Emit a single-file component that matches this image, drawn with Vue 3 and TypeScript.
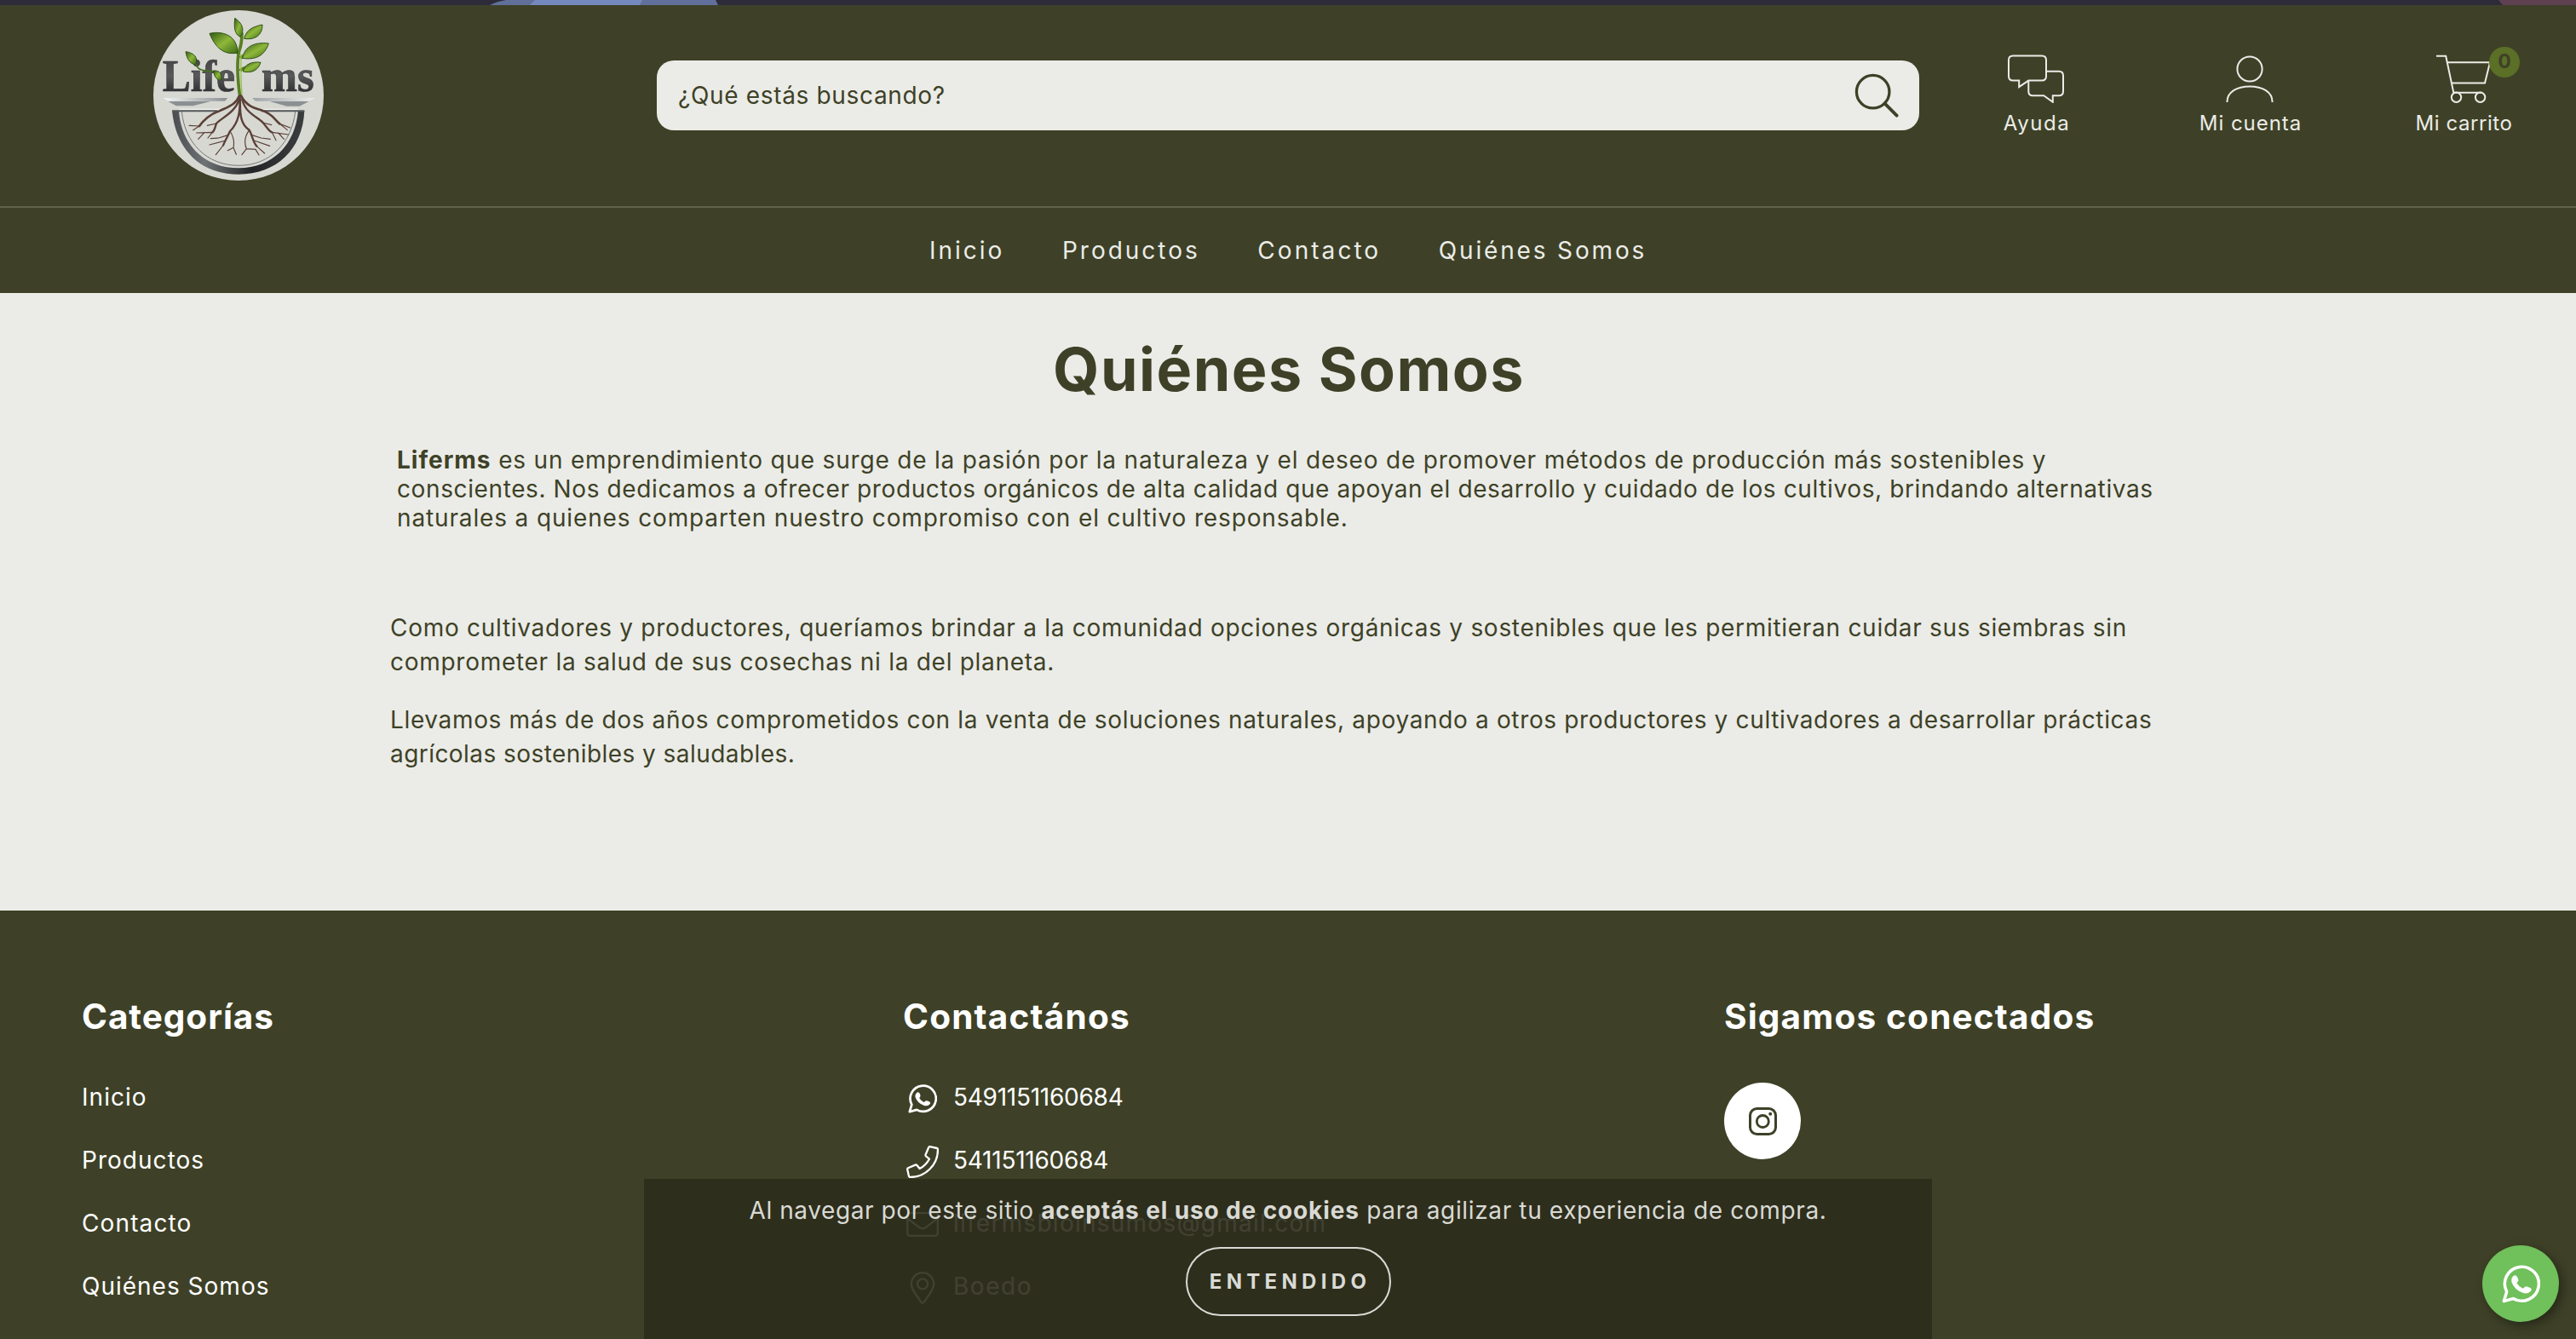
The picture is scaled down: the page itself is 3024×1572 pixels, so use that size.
<script setup lang="ts">
interface TextRun {
  text: string
  tracking: number
  strong?: boolean
}

interface ContactItem extends TextRun {
  icon: 'whatsapp' | 'phone' | 'mail' | 'pin'
}

const navLinks: TextRun[] = [
  { text: 'Inicio', tracking: 3 },
  { text: 'Productos', tracking: 3 },
  { text: 'Contacto', tracking: 3.05 },
  { text: 'Quiénes Somos', tracking: 2.85 },
]

// Each paragraph is a list of lines; each line is a list of runs.
const intro: TextRun[][] = [
  [
    { text: 'Liferms', tracking: 1, strong: true },
    {
      text: ' es un emprendimiento que surge de la pasión por la naturaleza y el deseo de promover métodos de producción más sostenibles y',
      tracking: 0.8,
    },
  ],
  [
    {
      text: 'conscientes. Nos dedicamos a ofrecer productos orgánicos de alta calidad que apoyan el desarrollo y cuidado de los cultivos, brindando alternativas',
      tracking: 0.61,
    },
  ],
  [{ text: 'naturales a quienes comparten nuestro compromiso con el cultivo responsable.', tracking: 0.86 }],
]

const paragraphs: TextRun[][] = [
  [
    {
      text: 'Como cultivadores y productores, queríamos brindar a la comunidad opciones orgánicas y sostenibles que les permitieran cuidar sus siembras sin',
      tracking: 0.715,
    },
    { text: 'comprometer la salud de sus cosechas ni la del planeta.', tracking: 0.72 },
  ],
  [
    {
      text: 'Llevamos más de dos años comprometidos con la venta de soluciones naturales, apoyando a otros productores y cultivadores a desarrollar prácticas',
      tracking: 0.655,
    },
    { text: 'agrícolas sostenibles y saludables.', tracking: 0.44 },
  ],
]

const categories: TextRun[] = [
  { text: 'Inicio', tracking: 1.05 },
  { text: 'Productos', tracking: 1.03 },
  { text: 'Contacto', tracking: 1.12 },
  { text: 'Quiénes Somos', tracking: 1 },
]

const contacts: ContactItem[] = [
  { icon: 'whatsapp', text: '5491151160684', tracking: -0.26 },
  { icon: 'phone', text: '541151160684', tracking: -0.24 },
  { icon: 'mail', text: 'lifermsbioinsumos@gmail.com', tracking: 1.25 },
  { icon: 'pin', text: 'Boedo', tracking: 1.55 },
]

const cookieText: TextRun[] = [
  { text: 'Al navegar por este sitio ', tracking: 0.59 },
  { text: 'aceptás el uso de cookies', tracking: 0.87, strong: true },
  { text: ' para agilizar tu experiencia de compra.', tracking: 0.64 },
]

const track = (run: TextRun) => ({ letterSpacing: `${run.tracking}px` })
</script>

<template>
  <div class="page">
    <div class="slider-edge">
      <svg width="3024" height="6" viewBox="0 0 3024 6">
        <path d="M575 6 Q582 2 594 0 H840 L843 6Z" fill="#60709a" />
        <path d="M622 6 L628 0 H754 L751 6Z" fill="#7489bd" />
        <path d="M2938 6 L2933 0 H3024 V6Z" fill="#5e4050" />
      </svg>
    </div>

    <header class="header">
      <div class="header-main">
        <svg class="logo" viewBox="60 36 600 600">
          <defs>
            <linearGradient id="ink" x1="0" y1="0" x2="0" y2="1">
              <stop offset="0" stop-color="#3c3c3e" />
              <stop offset=".5" stop-color="#58595b" />
              <stop offset="1" stop-color="#161617" />
            </linearGradient>
            <linearGradient id="rim" x1="0" y1="0" x2="1" y2="0">
              <stop offset="0" stop-color="#4a4c4e" />
              <stop offset=".25" stop-color="#6f7376" />
              <stop offset=".6" stop-color="#232425" />
              <stop offset="1" stop-color="#3b3d3e" />
            </linearGradient>
            <linearGradient id="leaf" x1="0" y1="0" x2="1" y2="1">
              <stop offset="0" stop-color="#2f5a14" />
              <stop offset=".5" stop-color="#8fb83a" />
              <stop offset="1" stop-color="#3c6a18" />
            </linearGradient>
            <linearGradient id="bar" x1="0" y1="0" x2="1" y2="0">
              <stop offset="0" stop-color="#f4f5f5" />
              <stop offset=".45" stop-color="#84898c" />
              <stop offset="1" stop-color="#eceded" />
            </linearGradient>
          </defs>
          <circle cx="360" cy="336" r="300" fill="#d7d8d2" />
          <path d="M126 390 H150 C158 510 240 592 360 592 C480 592 560 510 570 390 H592 C586 528 492 614 360 614 C226 614 140 528 126 390Z" fill="url(#rim)" />
          <path d="M160 392 C170 500 246 583 360 583 C474 583 548 500 560 392" fill="none" stroke="#77797a" stroke-width="3" />
          <path d="M126 391 H285 M440 391 H592" stroke="#55585a" stroke-width="6" />
          <path d="M150 385 H300 M430 385 H570" stroke="#f1f2f1" stroke-width="4" />
          <path d="M94 345 H322 L312 356 H112Z M408 345 H630 L608 356 H420Z" fill="url(#bar)" />
          <path d="M112 357 H262 L200 373 H140Z M470 357 H608 L575 374 H530Z" fill="#8b9092" />
          <g class="wordmark" fill="url(#ink)" stroke="#3a3a3c" stroke-width="2">
            <text x="92" y="322" textLength="256" lengthAdjust="spacingAndGlyphs">Life</text>
            <text x="440" y="322" textLength="186" lengthAdjust="spacingAndGlyphs">ms</text>
          </g>
          <g fill="none" stroke="#5a4038" stroke-linecap="round" stroke-linejoin="round">
            <path stroke-width="8" d="M364 335 C350 370 325 375 290 392 C262 400 235 425 222 444 M368 335 C385 370 410 380 440 388 C480 400 490 425 505 436" />
            <path stroke-width="7" d="M362 350 C350 395 300 415 282 435 C276 452 276 460 268 466 M373 350 C385 400 425 410 446 432 C462 450 466 462 478 466 M365 340 C366 390 362 430 330 462 C322 480 310 500 306 512 M366 350 C364 410 370 440 398 458 C410 480 410 500 424 515" />
            <path stroke-width="3.5" d="M222 444 L186 442 M222 444 L200 458 M505 436 L542 450 M505 436 L532 458 M268 466 L212 468 M240 467 L218 490 M268 466 L252 486 M478 466 L536 474 M500 468 L520 490 M478 466 L492 494 M330 462 C342 480 346 500 342 520 L322 530 M342 520 L352 544 M306 512 L280 545 M315 495 L258 510 M325 475 L290 486 L262 488 M398 458 C382 480 378 500 388 524 L372 545 M388 524 L420 526 L432 546 M424 515 L452 540 M415 495 L470 514 M405 475 L440 486 L472 490 M282 435 L250 442 M446 432 L476 440" />
          </g>
          <path d="M364 334 C356 270 354 215 362 180 C370 160 372 140 372 115 M366 250 C378 232 395 240 408 235 M360 190 C352 180 342 170 334 158 M366 205 C380 195 390 190 402 182" fill="none" stroke="#587f22" stroke-width="11" />
          <path d="M372 334 C368 280 368 230 369 190" fill="none" stroke="#98c24a" stroke-width="4" />
          <path d="M210 225 C220 262 262 240 292 262" fill="none" stroke="#45701c" stroke-width="5" />
          <g fill="url(#leaf)" stroke="#2f5216" stroke-width="3">
            <path d="M258 118 C300 108 356 122 357 186 C310 196 278 168 258 118Z" />
            <path d="M347 64 C372 80 384 105 366 130 C345 120 344 95 347 64Z" />
            <path d="M444 87 C445 125 416 142 380 136 C386 106 410 94 444 87Z" />
            <path d="M466 153 C452 198 418 212 374 205 C382 160 420 148 466 153Z" />
            <path d="M438 220 C428 250 406 258 376 252 C382 225 408 216 438 220Z" />
            <path d="M174 182 C205 186 220 205 208 228 C186 222 178 206 174 182Z" />
            <path d="M272 250 C295 246 302 262 300 282 C285 285 274 270 272 250Z" />
          </g>
        </svg>

        <div class="search">
          <span class="search-placeholder">¿Qué estás buscando?</span>
          <svg width="52" height="52" viewBox="0 0 54 54" fill="none" stroke="#3e4127" stroke-width="3.4">
            <circle cx="22.5" cy="22.5" r="20" />
            <path d="M36.8 36.8 L51.5 51.5" stroke-width="4" stroke-linecap="round" />
          </svg>
        </div>

        <div class="utilities">
          <div class="utility">
            <svg class="line-icon" width="68" height="57" viewBox="0 0 68 57">
              <path d="M7 1.5 H41 Q46 1.5 46 6.5 V25.6 Q46 30.6 41 30.6 H25.3 L14.2 38.2 V30.6 H7 Q2 30.6 2 25.6 V6.5 Q2 1.5 7 1.5Z" />
              <path d="M46 19.7 H61 Q66 19.7 66 24.7 V43.3 Q66 48.3 61 48.3 H53.8 V55.8 L43.2 48.3 H30.3 Q25.3 48.3 25.3 43.3 V30.6" />
            </svg>
            <span class="utility-label ayuda">Ayuda</span>
          </div>
          <div class="utility">
            <svg class="line-icon" width="56" height="57" viewBox="0 0 56 57">
              <circle cx="28" cy="17" r="14.6" />
              <path d="M1.4 56 C1.4 44 13 37.4 28 37.4 C43 37.4 54.6 44 54.6 56" />
            </svg>
            <span class="utility-label cuenta">Mi cuenta</span>
          </div>
          <div class="utility">
            <div class="cart">
              <svg class="line-icon" width="66" height="57" viewBox="0 0 66 57">
                <path d="M1 1.7 H12.2 L21.3 44.7 H54.5 M13.8 9.3 H64 L58 33.4 H18.8" />
                <circle cx="24.5" cy="50.3" r="5.7" />
                <circle cx="52.6" cy="50.3" r="5.7" />
              </svg>
              <span class="badge">0</span>
            </div>
            <span class="utility-label carrito">Mi carrito</span>
          </div>
        </div>
      </div>

      <nav class="nav">
        <a v-for="link in navLinks" :key="link.text" :style="track(link)">{{ link.text }}</a>
      </nav>
    </header>

    <main class="main">
      <h1>Quiénes Somos</h1>
      <div class="intro">
        <div v-for="(line, i) in intro" :key="i" class="line">
          <span v-for="run in line" :key="run.text" :class="{ strong: run.strong }" :style="track(run)">{{ run.text }}</span>
        </div>
      </div>
      <div class="body">
        <p v-for="(lines, i) in paragraphs" :key="i">
          <span v-for="line in lines" :key="line.text" class="line" :style="track(line)">{{ line.text }}</span>
        </p>
      </div>
    </main>

    <footer class="footer">
      <section class="column">
        <h2 class="h-categorias">Categorías</h2>
        <div v-for="item in categories" :key="item.text" class="row" :style="track(item)">{{ item.text }}</div>
      </section>

      <section class="column">
        <h2 class="h-contacto">Contactános</h2>
        <div v-for="item in contacts" :key="item.text" class="row contact">
          <span class="contact-icon">
            <svg v-if="item.icon === 'whatsapp'" width="34" height="34" viewBox="0 0 34 34">
              <path d="M1.8 32.2 L4.3 23.8 A15.1 15.1 0 1 1 10.2 29.9 Z" fill="none" stroke="currentColor" stroke-width="2.7" stroke-linejoin="round" />
              <path d="M9.6 10.4 q2.6 -2.4 4.1 .4 q1.4 2.8 .6 3.8 q-1.1 1.2 -1 1.7 q2 3.4 5.3 4.7 q.8 -.2 1.8 -1.5 q1 -1 4.4 .8 q2.2 1.2 1.1 2.7 q-3 3.2 -7 1.9 q-7.9 -2.5 -10.4 -9.9 q-.5 -3 1.1 -4.6z" fill="currentColor" />
            </svg>
            <svg v-else-if="item.icon === 'phone'" width="38" height="38" viewBox="0 0 38 38">
              <path d="M27.5 1.2 L36 3 Q37 3.3 37 4.5 C37 22.5 22.5 37 4.5 37 Q3.3 37 3 36 L1.2 28 Q.9 26.8 2 26.2 L10.5 22.6 Q11.6 22.2 12.4 23 L15.6 27 Q23 23.4 27 15.6 L23 12.4 Q22.2 11.6 22.6 10.5 L26.2 2 Q26.6 1 27.5 1.2Z" fill="none" stroke="currentColor" stroke-width="2.3" stroke-linejoin="round" />
            </svg>
            <svg v-else-if="item.icon === 'mail'" width="38" height="29" viewBox="0 0 38 29">
              <g fill="none" stroke="currentColor" stroke-width="2.3">
                <rect x="1.2" y="1.2" width="35.6" height="26.6" rx="3" />
                <path d="M1.2 7.4 L14.6 17.6 Q19 21 23.4 17.6 L36.8 7.4" />
              </g>
            </svg>
            <svg v-else width="30" height="38" viewBox="0 0 30 38">
              <g fill="none" stroke="currentColor" stroke-width="2.3">
                <path d="M15 36.6 Q13.8 36.6 13 35.2 C6 25 1.8 20 1.8 14.4 A13.2 13.2 0 0 1 28.2 14.4 C28.2 20 24 25 17 35.2 Q16.2 36.6 15 36.6Z" />
                <circle cx="15" cy="14.4" r="6" />
              </g>
            </svg>
          </span>
          <span :style="track(item)">{{ item.text }}</span>
        </div>
      </section>

      <section class="column">
        <h2 class="h-social">Sigamos conectados</h2>
        <a class="instagram">
          <svg width="33" height="33" viewBox="0 0 33 33" fill="none" stroke="#3e4127">
            <rect x="1.5" y="1.5" width="30" height="30" rx="8" stroke-width="3" />
            <circle cx="16.3" cy="16.5" r="7" stroke-width="2.8" />
            <circle cx="25.2" cy="7.8" r="2" fill="#3e4127" stroke="none" />
          </svg>
        </a>
      </section>
    </footer>

    <aside class="cookies">
      <p>
        <span v-for="run in cookieText" :key="run.text" :class="{ strong: run.strong }" :style="track(run)">{{ run.text }}</span>
      </p>
      <button type="button">ENTENDIDO</button>
    </aside>

    <a class="whatsapp-float">
      <svg width="45" height="45" viewBox="0 0 34 34">
        <path d="M1.8 32.2 L4.3 23.8 A15.1 15.1 0 1 1 10.2 29.9 Z" fill="none" stroke="#fff" stroke-width="2.7" stroke-linejoin="round" />
        <path d="M9.6 10.4 q2.6 -2.4 4.1 .4 q1.4 2.8 .6 3.8 q-1.1 1.2 -1 1.7 q2 3.4 5.3 4.7 q.8 -.2 1.8 -1.5 q1 -1 4.4 .8 q2.2 1.2 1.1 2.7 q-3 3.2 -7 1.9 q-7.9 -2.5 -10.4 -9.9 q-.5 -3 1.1 -4.6z" fill="#fff" />
      </svg>
    </a>
  </div>
</template>

<style scoped>
.page {
  position: relative;
  width: 3024px;
  height: 1572px;
  overflow: hidden;
  background: #ebece7;
  color: #3e4127;
  font-family: Inter, sans-serif;
  font-size: 28px;
}

.slider-edge {
  height: 6px;
  background: #2d2b3a;
}

.slider-edge svg,
.logo,
.line-icon {
  display: block;
}

.header {
  background: #3e4127;
  color: #ebece7;
}

.header-main {
  box-sizing: border-box;
  display: flex;
  align-items: center;
  height: 238px;
  padding: 0 0 24px 180px;
  border-bottom: 2px solid #606249;
}

.logo {
  width: 200px;
  height: 200px;
}

.wordmark {
  font-family: "Liberation Serif", serif;
  font-size: 160px;
  font-weight: 700;
}

.search {
  box-sizing: border-box;
  display: flex;
  align-items: center;
  justify-content: space-between;
  width: 1482px;
  height: 82px;
  margin-left: 391px;
  padding: 0 24px 0 25px;
  border-radius: 20px;
  background: #ebece7;
  color: #3e4127;
}

.search-placeholder {
  letter-spacing: 0.66px;
}

.utilities {
  display: flex;
  margin-left: 11.5px;
}

.utility {
  display: flex;
  flex-direction: column;
  align-items: center;
  gap: 9px;
  width: 251px;
}

.line-icon {
  fill: none;
  stroke: #ebece7;
  stroke-width: 2;
}

.utility-label {
  font-size: 24px;
  line-height: 30px;
}

.ayuda {
  padding-left: 2px;
  letter-spacing: 1.5px;
}

.cuenta {
  padding-left: 2px;
  letter-spacing: 0.95px;
}

.carrito {
  padding-left: 1px;
  letter-spacing: 0.55px;
}

.cart {
  position: relative;
}

.badge {
  position: absolute;
  top: -9px;
  left: 63px;
  width: 36px;
  height: 36px;
  border-radius: 50%;
  background: #5b6f26;
  color: #3e4127;
  font-size: 23px;
  font-weight: 700;
  line-height: 35px;
  text-align: center;
}

.nav {
  display: flex;
  gap: 67.5px;
  height: 100px;
  padding-left: 1091px;
  line-height: 101px;
  white-space: nowrap;
}

.main {
  box-sizing: border-box;
  height: 725px;
  padding: 50px 458px 0;
}

h1 {
  margin: 0;
  padding-left: 2px;
  font-size: 70px;
  font-weight: 700;
  line-height: 80px;
  letter-spacing: 1.5px;
  text-align: center;
}

.line {
  display: block;
  white-space: pre;
}

.strong {
  font-weight: 700;
}

.intro {
  margin: 49px 0 0 8px;
  line-height: 34px;
}

.body {
  margin-top: 92px;
  line-height: 40px;
}

.body p {
  margin: 0 0 28px;
}

.footer {
  box-sizing: border-box;
  display: flex;
  height: 503px;
  padding: 101px 96px 0;
  background: #3e4127;
  color: #fff;
}

.column {
  flex: none;
  width: 964px;
}

h2 {
  margin: 0 0 33px;
  font-size: 40.5px;
  font-weight: 700;
  line-height: 48px;
}

.h-categorias {
  letter-spacing: 0.95px;
}

.h-contacto {
  letter-spacing: 1.2px;
}

.h-social {
  letter-spacing: 1.18px;
}

.row {
  height: 74px;
  line-height: 74px;
}

.contact {
  display: flex;
  align-items: center;
}

.contact-icon {
  display: flex;
  justify-content: center;
  width: 46px;
  margin: 3px 13px 0 0;
}

.instagram {
  display: flex;
  align-items: center;
  justify-content: center;
  width: 90px;
  height: 90px;
  margin-top: 53px;
  border-radius: 50%;
  background: #fff;
}

.cookies {
  position: absolute;
  bottom: 0;
  left: 756px;
  box-sizing: border-box;
  display: flex;
  flex-direction: column;
  align-items: center;
  width: 1512px;
  height: 188px;
  padding-top: 17px;
  background: rgba(44, 44, 28, 0.9);
  color: #d9dad5;
}

.cookies p {
  margin: 0 0 23px;
  line-height: 40px;
  white-space: pre;
}

.cookies button {
  box-sizing: border-box;
  width: 241px;
  height: 81px;
  padding: 0 0 0 5px;
  border: 2px solid #d9dad5;
  border-radius: 41px;
  background: none;
  color: inherit;
  font: 700 24px/77px Inter, sans-serif;
  letter-spacing: 5.3px;
}

.whatsapp-float {
  position: absolute;
  right: 20px;
  bottom: 20px;
  display: flex;
  align-items: center;
  justify-content: center;
  width: 90px;
  height: 90px;
  border-radius: 50%;
  background: #70c05b;
  box-shadow: 4px 4px 12px rgba(0, 0, 0, 0.4);
}
</style>
